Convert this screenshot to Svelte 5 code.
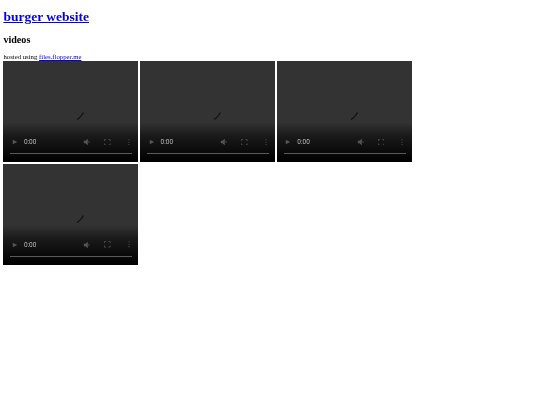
<script>
    const videos = [1, 2, 3, 4];
</script>

<main>
    <h1><a href="#top">burger website</a></h1>
    <h2>videos</h2>
    <p>hosted using <a href="#files">files.flopper.me</a></p>

    <section class="videos">
        {#each videos as video (video)}
            <div class="video">
                <svg class="spinner" viewBox="0 0 12 12" aria-hidden="true">
                    <path d="M2 10.5C4 9.5 6 7.5 8.5 3.5" />
                </svg>
                <div class="controls">
                    <div class="row">
                        <svg class="play" viewBox="0 0 8 8" aria-hidden="true">
                            <path d="M1 1l6 3-6 3z" />
                        </svg>
                        <span class="time">0:00</span>
                        <svg class="volume" viewBox="0 0 10 10" aria-hidden="true">
                            <path d="M1 3.5h2L6 1v8L3 6.500H1z" />
                            <path d="M7 3.200a2 2 0 0 1 0 3.600z" />
                        </svg>
                        <svg class="fullscreen" viewBox="0 0 8 8" aria-hidden="true">
                            <path d="M.5 2.500V.5h2M5.500.5h2v2M7.500 5.500v2h-2M2.500 7.500h-2v-2" />
                        </svg>
                        <svg class="more" viewBox="0 0 2 8" aria-hidden="true">
                            <circle cx="1" cy="1" r=".7" />
                            <circle cx="1" cy="4" r=".7" />
                            <circle cx="1" cy="7" r=".7" />
                        </svg>
                    </div>
                    <div class="track"></div>
                </div>
            </div>
        {/each}
    </section>
</main>

<style>
    :global(body) {
        background-color: #fff;
        color: #000;
        font-family: "Liberation Serif", serif;
    }

    main {
        padding: 3.4px;
        /* reference is a downscaled capture, everything is slightly soft */
        filter: blur(0.3px);
    }

    h1 {
        margin: 0;
        padding-top: 5.5px;
        font-size: 13.5px;
        line-height: 15.500px;
    }

    h2 {
        margin: 10px 0 0 0;
        font-size: 10.100px;
        line-height: 11.500px;
    }

    p {
        margin: 7.500px 0 0 0;
        font-size: 6.750px;
        line-height: 7.500px;
    }

    a {
        color: #0000ee;
    }

    .videos {
        display: flex;
        flex-wrap: wrap;
        gap: 1.700px;
    }

    .video {
        position: relative;
        display: flex;
        align-items: flex-end;
        width: 135px;
        height: 101px;
        background-color: #333;
    }

    .spinner {
        position: absolute;
        top: 48px;
        left: 72px;
        width: 12px;
        height: 12px;
        fill: none;
        stroke: #111;
        stroke-width: 1.300;
    }

    .controls {
        flex: 1;
        height: 40px;
        padding: 0 6px 7.500px 7px;
        box-sizing: border-box;
        display: flex;
        flex-direction: column;
        justify-content: flex-end;
        background: linear-gradient(to bottom, rgba(0, 0, 0, 0), rgba(0, 0, 0, 0.5) 35%, #000);
    }

    .row {
        display: flex;
        align-items: center;
        height: 10px;
        margin-bottom: 6px;
    }

    .row svg {
        flex: none;
        fill: #555;
    }

    .play {
        width: 6px;
        height: 6px;
        margin-left: 1.500px;
    }

    .time {
        margin-left: 6px;
        font-family: "Roboto", "Liberation Sans", sans-serif;
        font-size: 6.500px;
        color: #bbb;
    }

    .volume {
        width: 8px;
        height: 8px;
        margin-left: auto;
    }

    .fullscreen {
        width: 6.500px;
        height: 6.500px;
        margin-left: 13px;
        fill: none !important;
        stroke: #555;
        stroke-width: 1;
    }

    .more {
        width: 2px;
        height: 6.500px;
        margin-left: 17px;
        margin-right: 2.500px;
    }

    .track {
        height: 1.500px;
        background-color: #5a5a5a;
    }
</style>
